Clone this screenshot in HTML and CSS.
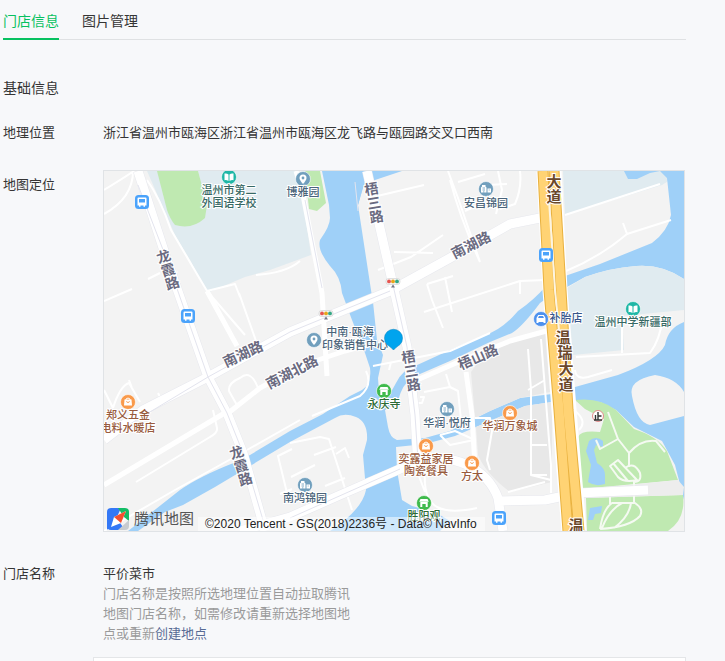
FILE: index.html
```html
<!DOCTYPE html>
<html lang="zh-CN">
<head>
<meta charset="utf-8">
<title>门店信息</title>
<meta name="viewport" content="width=device-width, initial-scale=1">
<link rel="stylesheet" href="styles.css">
</head>
<body>
<main class="page">
  <nav class="tabs">
    <a class="tab tab-active" href="#info">门店信息</a>
    <a class="tab" href="#photos">图片管理</a>
  </nav>
  <h2 class="section-title">基础信息</h2>
  <dl class="details">
    <div class="row row-address"><dt>地理位置</dt><dd>浙江省温州市瓯海区浙江省温州市瓯海区龙飞路与瓯园路交叉口西南</dd></div>
    <div class="row row-map">
      <dt>地图定位</dt>
      <dd class="map">
        <svg class="map-canvas" viewBox="104 171 580 360" role="img" aria-label="地图">
          <defs>
            <g id="bus"><rect x="-7" y="-7" width="14" height="14" rx="3.500" fill="#4ba3fb"/><path d="M-3.500-4.500h7q1 0 1 1V3.500h-1.500v1.200h-1.500V3.500h-3v1.200H-3V3.500h-1.500v-7q0-1 1-1z" fill="#fff"/><rect x="-3" y="-3" width="6" height="3.500" fill="#4ba3fb"/></g>
            <g id="shop"><circle r="7.500" fill="#f99a4b" stroke="#fff" stroke-width=".6"/><path d="M-3.500-2.500h7l.5 6h-8z" fill="#fff"/><path d="M-2-2v-1q2-2 4 0v1" fill="none" stroke="#fff"/><path d="M-1.700-.5q1.700 2.200 3.400 0" fill="none" stroke="#f99a4b"/></g>
            <g id="school"><circle r="7.500" fill="#1fb7a6" stroke="#fff" stroke-width=".6"/><path d="M-4.500-3.500q2.500-.5 4 1v6.500q-2-1.200-4-.8zM4.500-3.500q-2.500-.5-4 1v6.500q2-1.200 4-.8z" fill="#fff"/></g>
            <g id="estate"><circle r="7.500" fill="#719fbd" stroke="#fff" stroke-width=".6"/><path d="M-5 3.500v-5l1-1v-1.500h3.500V-2.500l1 1v5zM1.500 3.500v-4h3.500v4z" fill="#fff"/><path d="M-3.500-1h2.500M-3.500 1h2.500M-2.200 2.200v1.500M2.700 1h1" stroke="#719fbd" stroke-width=".9"/></g>
            <g id="place"><circle r="7.500" fill="#719fbd" stroke="#fff" stroke-width=".6"/><path d="M0 5Q-3.500 1-3.500-1a3.500 3.500 0 0 1 7 0Q3.500 1 0 5z" fill="#fff"/><circle cy="-1" r="1.400" fill="#719fbd"/></g>
            <g id="temple"><circle r="7.500" fill="#3fba4c" stroke="#fff" stroke-width=".6"/><path d="M-4.800-1.200L-3.500-4h7l1.300 2.800zM-3.700-1h7.400v5h-2V1h-3.400v3h-2z" fill="#fff"/></g>
            <g id="signal"><rect x="-7" y="-2.500" width="14" height="6" rx="2.500" fill="#f5f5f5" stroke="#ccc" stroke-width=".6"/><circle cx="-4" cy=".4" r="1.900" fill="#e65550"/><circle cy=".4" r="1.900" fill="#e8a61b"/><circle cx="4" cy=".4" r="1.900" fill="#35a885"/><path d="M-2 6.500L0 3.500 2 6.500z" fill="#778"/></g>
          </defs>

          <rect x="104" y="171" width="580" height="360" fill="#f3f3f3"/>
          <g fill="#e0ebf0">
            <path d="M147 171L175 235 190 260 207 293 245 277 270 270 311 255 303 200 295 171z"/>
            <path d="M563 171H684L662 185 565 215z"/>
          </g>
          <g fill="#9fd0f8">
            <path d="M322 171L329 205 330 218Q330 226 320 240 317 250 330 266 341 277 342 293L352 320 365 353 370 368Q372 384 362 390L350 396 323 414 290 431 250 455 236 462Q200 476 180 490L128 531H138L165 512 183 505 215 487 290 442 335 418Q344 412 356 417T367 440L363 455 366 490Q362 510 330 531H440L450 521 435 512 412 506 402 500 397 470 396 447 425 444 455 436 490 421 525 406 552 402V394L520 398 490 411 450 431 425 438 397 440Q390 438 388 427L385 410 398 401Q402 384 413 377L450 361 490 342 512 333Q523 326 540 303L553 294 567 287 585 277Q610 268 636 266T684 279V171H660L667 178 671 215Q668 231 652 243L600 264 565 276 546 286Q534 300 518 311 502 330 485 335L450 350 415 366Q402 370 396 383L391 392 379 392 378 378 383 355 377 340 373 302 371 290 358 205 363 188 367 171z"/>
            <path d="M355 171H402L372 181 368 175 362 190 358 205z"/>
            <path d="M624 171H660L650 173 637 179 628 179z"/>
            <path d="M575 387L618 375Q658 360 665 345 668 328 684 322V500L675 465 662 441 634 427 616 410 600 402 576 400 552 402V394z"/>
          </g>
          <path d="M567 288L585 277Q610 268 636 266T684 279V310L622 316 624 350 573 355z" fill="#e0ebf0"/>
          <path d="M684 392Q676 378 655 375 628 380 632 396 637 423 650 425L684 416z" fill="#f3f3f3"/>
          <path d="M471 372L487 350 545 333 550 392 520 398 490 411 475 418zM476 427L490 421 525 406 552 402V482L510 492Q486 474 478 455z" fill="#e8e8e8"/>
          <g fill="#bfe9b1">
            <path d="M157 171H198L207 205 205 218Q192 230 175 225 170 219 167 210z"/>
            <path d="M305 171H320L326 203 317 211 309 209z"/>
            <path d="M575 400Q600 397 616 410L634 429Q657 436 667 451L678 480 581 489 578 437Q581 430 600 432L604 419 585 409z"/>
            <path d="M586 498L683 495Q686 519 668 531H587z"/>
          </g>
          <path d="M589 441q7-6 14 0v6l-7-2-2 5 3 13q8 5 8 12v9q-10 3-17-2l3-17-5-14zM590 508l12-2-1 7-6 1-2 6h-5z" fill="#9fd0f8"/>
          <path d="M580 490L678 480 684 487 683 495 586 498z" fill="#ededed"/>

          <g class="lanes">
            <path d="M104 190Q130 174 134 171M104 214Q133 198 133 171M147 180Q160 198 171 230L207 291 245 335M148 279L160 273M104 301L132 289M207 291L235 284 240 297M239 293L256 341M256 275Q286 273 300 261M104 390L113 408M113 408Q120 386 129 383L140 402M129 380L132 388M158 393L160 397M238 407L229 391Q228 383 240 378 251 369 258 388M213 410L217 428Q218 433 210 437L136 482M104 531L175 490 240 454 300 420M292 449L278 456 287 493M280 494L292 489M291 477L315 465M290 443L320 437 329 439 352 510M314 455L336 447M325 486L345 478M336 454L345 448 349 458M450 180Q460 218 480 262M373 197L424 185M378 270L411 257 443 235M394 252L433 253M427 284L453 276M427 284L432 300 443 328M445 277L452 312M520 281V294M448 171L458 198 480 262M458 182L485 174M465 211L485 202M498 171L502 190 496 214M520 171Q522 188 515 204L500 209M487 185L507 184"/>
            <path d="M566 271Q600 257 627 234L671 220M623 223L627 234M565 215L660 184M373 366L450 351 490 333M391 362L389 370M366 371Q373 385 360 396L312 416M414 403L422 403 424 397 420 397M446 374L450 387 424 392M450 387L458 391 462 430M424 312L520 281 546 280M440 435L455 431 475 440M440 435L450 445 474 440M475 418L490 418 492 431 487 460 490 470M528 349L531 390V475L551 480M528 390L545 380M531 445H547M531 475H547M541 339L551 465V493M576 357L650 353Q660 340 663 317M622 316V353M575 370Q576 380 588 377L612 370M574 410Q588 421 579 430M508 492L545 482"/>
            <path d="M425 471Q423 499 437 507 450 514 477 508M417 471L425 492"/>
          </g>
          <g class="park-lanes">
            <path d="M608 412L618 439 629 453Q641 439 656 441L665 452M618 439L600 449 596 440M629 453V467"/>
            <path d="M610 466L618 460 637 480Q624 483 618 477zM613 463L628 481M625 468Q634 461 640 473 642 482 634 482M634 481V503"/>
            <path d="M600 529Q603 509 612 503H635Q644 509 640 516 630 527 600 529M602 528Q609 510 622 503M614 528Q629 517 631 503M610 497V504"/>
          </g>
          <path class="edge" d="M104 440L143 410 208 377 290 332 390 291 450 258 510 224 545 217M138 171L167 260 188 320 208 377 227 413 243 453 265 531M367 171L393 285 407 347 415 415 418 470M240 531L290 517 340 495 400 469Q440 451 467 465 490 476 498 498L503 531M498 501L545 500 578 493 648 490"/>
          <path class="road" d="M104 440L143 410 208 377 290 332 390 291 450 258 510 224 545 217M138 171L167 260 188 320 208 377 227 413 243 453 265 531M367 171L393 285 407 347 415 415 418 470M240 531L290 517 340 495 400 469Q440 451 467 465 490 476 498 498L503 531M498 501L545 500 578 493 648 490"/>
          <path class="minor" d="M104 485L223 414M227 414L260 388 300 366 345 351 367 345M207 291L237 346M303 195L322 293 327 376M296 171L303 195M417 380L463 360 510 341 550 330M466 372L472 415 475 467"/>
          <path class="center" d="M120 430L208 377 290 332 390 291M138 185L167 260 188 320 208 377 227 413 243 453 263 520M393 285L407 347 415 415 418 460M290 518L400 469M305 200L322 288M355 182L358 211"/>

          <path class="highway-base" d="M549 171L555 290 564 410 574 531"/>
          <g class="highway-edge"><path d="M543 171L549 290 559 410 568 531"/><path d="M554 171L561 290 568 410 579 531"/></g>
          <g class="highway"><path d="M543 171L549 290 559 410 568 531"/><path d="M554 171L561 290 568 410 579 531"/></g>
          <path class="highway-gap" d="M549 200L555 290 561 350"/>

          <use href="#bus" x="142" y="202"/><use href="#bus" x="188" y="316"/><use href="#bus" x="546" y="255"/><use href="#bus" x="499" y="518"/>
          <use href="#school" x="229" y="177"/><use href="#school" x="633" y="309"/>
          <use href="#place" x="303" y="179"/><use href="#place" x="314" y="340"/>
          <use href="#estate" x="486" y="189"/><use href="#estate" x="447" y="409"/><use href="#estate" x="305" y="485"/>
          <use href="#shop" x="128" y="402"/><use href="#shop" x="510" y="413"/><use href="#shop" x="426" y="446"/><use href="#shop" x="472" y="463"/>
          <use href="#temple" x="384" y="391"/><use href="#temple" x="424" y="503"/>
          <use href="#signal" x="393" y="281"/><use href="#signal" x="326" y="313"/>
          <g transform="translate(541 319)"><circle r="7.500" fill="#4d91ee" stroke="#fff" stroke-width=".6"/><path d="M-4.500 4v-5l1.700-3h5.600L4.500-1v5h-2V3h-5v1z" fill="#fff"/><path d="M-3-1l1-2h4l1 2z" fill="#4d91ee"/></g>
          <g transform="translate(598 416)"><circle r="5.500" fill="#fff" stroke="#e38b8b"/><path d="M-4 4h8M0-4v8M0 0h3.500M-2.500-1v5" stroke="#333" stroke-width="1.400"/></g>

          <g class="poi poi-school"><text x="229" y="194">温州市第二</text><text x="229" y="207">外国语学校</text><text x="633" y="326">温州中学新疆部</text></g>
          <g class="poi poi-estate"><text x="303" y="196">博雅园</text><text x="486" y="207">安昌锦园</text><text x="350" y="336">中南·瓯海</text><text x="355" y="349">印象销售中心</text><text x="447" y="427">华润·悦府</text><text x="305" y="502">南鸿锦园</text></g>
          <g class="poi poi-shop"><text x="128" y="419">郑义五金</text><text x="128" y="432">电料水暖店</text><text x="510" y="430">华润万象城</text><text x="426" y="463">奕露益家居</text><text x="426" y="475">陶瓷餐具</text><text x="472" y="480">方太</text></g>
          <g class="poi poi-temple"><text x="384" y="408">永庆寺</text><text x="424" y="520">胜阳观</text></g>
          <g class="poi poi-car"><text x="566" y="322">补胎店</text></g>

          <g class="street">
            <text transform="translate(243 354) rotate(-25)" y="5">南湖路</text>
            <text transform="translate(292 372) rotate(-27)" y="5">南湖北路</text>
            <text transform="translate(471 245) rotate(-27)" y="5">南湖路</text>
            <text transform="translate(478 357) rotate(-24)" y="5">梧山路</text>
            <g transform="translate(168 270) rotate(-18)"><text y="-9">龙</text><text y="5">霞</text><text y="19">路</text></g>
            <g transform="translate(241 466) rotate(-18)"><text y="-9">龙</text><text y="5">霞</text><text y="19">路</text></g>
            <g transform="translate(374 203) rotate(-10)"><text y="-9">梧</text><text y="5">三</text><text y="19">路</text></g>
            <g transform="translate(411 371) rotate(-10)"><text y="-9">梧</text><text y="5">三</text><text y="19">路</text></g>
          </g>
          <g class="avenue"><text x="554" y="187">大</text><text x="554" y="202">道</text><text x="563" y="343">温</text><text x="565" y="358">瑞</text><text x="566" y="374">大</text><text x="566" y="390">道</text><text x="576" y="531">温</text></g>
          <path d="M393.500 350Q391.500 347.500 387 344.500A9 9 0 1 1 400 344.500Q395.500 347.500 393.500 350z" fill="#00a4ee" stroke="#1389c4" stroke-width=".6"/>
        </svg>
        <div class="map-footer">
          <span class="map-brand">
            <svg class="brand-mark" viewBox="0 0 22 22" aria-hidden="true"><path d="M4 0H14L10 9 0 22V4Q0 0 4 0z" fill="#3478f6"/><path d="M11 0H18Q22 0 22 4V13L17 9z" fill="#13bd65"/><path d="M0 16L11 12 18 22H4Q0 22 0 18z" fill="#3478f6"/><path d="M22 12V18Q22 22 18 22H11z" fill="#c7cbd0"/><path d="M4 19L7 9 19 3 14 15z" fill="#fff"/><path d="M19 3L14 15 7 9z" fill="#f4502f"/></svg>
            <span>腾讯地图</span>
          </span>
          <small class="map-credit">©2020 Tencent - GS(2018)2236号 - Data© NavInfo</small>
        </div>
      </dd>
    </div>
    <div class="row row-name">
      <dt>门店名称</dt>
      <dd><div>平价菜市</div><p class="hint">门店名称是按照所选地理位置自动拉取腾讯地图门店名称，如需修改请重新选择地图地点或重新<a href="#create">创建地点</a></p></dd>
    </div>
  </dl>
  <section class="panel"></section>
</main>
</body>
</html>
```
FILE: styles.css
```css
* { box-sizing: border-box; }
body {
  margin: 0;
  background: #f7f8fa;
  color: #353535;
  font-family: "Liberation Sans", "Noto Sans CJK SC", sans-serif;
  font-size: 13px;
  line-height: 20px;
}
a { text-decoration: none; }
.page { margin: 0 39px 0 3px; }
.tabs { display: flex; gap: 23px; height: 40px; border-bottom: 1px solid #dfe1e3; }
.tab { height: 40px; padding-top: 11px; color: #353535; font-size: 14px; }
.tab-active { color: #07c160; border-bottom: 2px solid #07c160; }
.section-title { margin: 38px 0 25px; font-size: 14px; font-weight: 400; line-height: 20px; }
.details { margin: 0; }
.row { display: grid; grid-template-columns: 100px minmax(0, 1fr); }
.row dt, .row dd { margin: 0; }
.row-address { margin-bottom: 27px; }
.row-map { margin-bottom: 32px; }
.row-map dt { padding-top: 5px; }
.row .map { position: relative; margin-right: 1px; border: 1px solid #e0e3e6; overflow: hidden; }
.map-canvas { display: block; width: 100%; height: auto; }
.map-footer { position: absolute; left: 3px; bottom: 0; display: flex; align-items: flex-end; gap: 4px; }
.map-brand { display: flex; align-items: center; gap: 5px; color: #555; font-size: 15px; line-height: 24px; }
.brand-mark { width: 22px; height: 22px; }
.map-credit { padding: 0 8px 0 7px; background: rgb(255 255 255 / 50%); color: #222; font-size: 12px; line-height: 14px; }
.hint { max-width: 250px; margin: 0; color: #9a9a9a; }
.hint a { color: #576b95; }
.panel { height: 4px; margin: 13px 0 0 90px; border: 1px solid #e4e6e8; border-bottom: 0; background: #fff; }

.map-canvas path { stroke-linejoin: round; }
.lanes, .park-lanes, .edge, .road, .minor, .center, .highway-base, .highway-edge, .highway, .highway-gap { fill: none; }
.lanes { stroke: #fff; stroke-width: 2; }
.park-lanes { stroke: #f5faf2; stroke-width: 2; }
.minor { stroke: #fff; stroke-width: 5; }
.edge { stroke: #e7e8ee; stroke-width: 10; }
.road { stroke: #fff; stroke-width: 9; }
.center { stroke: #e3e4ee; stroke-width: 1; }
.highway-base { stroke: #fff; stroke-width: 25; }
.highway-edge { stroke: #e9b13e; stroke-width: 11; }
.highway { stroke: #ffd374; stroke-width: 9; }
.highway-gap { stroke: #fdf4e0; stroke-width: 2; }
.map-canvas text { font-family: "Liberation Sans", "Noto Sans CJK SC", sans-serif; text-anchor: middle; paint-order: stroke; stroke: #fff; stroke-width: 2px; }
.poi { font-size: 11px; font-weight: 500; }
.poi-school { fill: #376964; }
.poi-estate { fill: #4a647a; }
.poi-shop { fill: #985b3d; }
.poi-temple { fill: #2c6b35; }
.poi-car { fill: #39568b; }
.street { fill: #6a6a80; font-size: 14px; font-weight: 700; }
.avenue { fill: #6b482a; font-size: 15px; font-weight: 700; }
```
